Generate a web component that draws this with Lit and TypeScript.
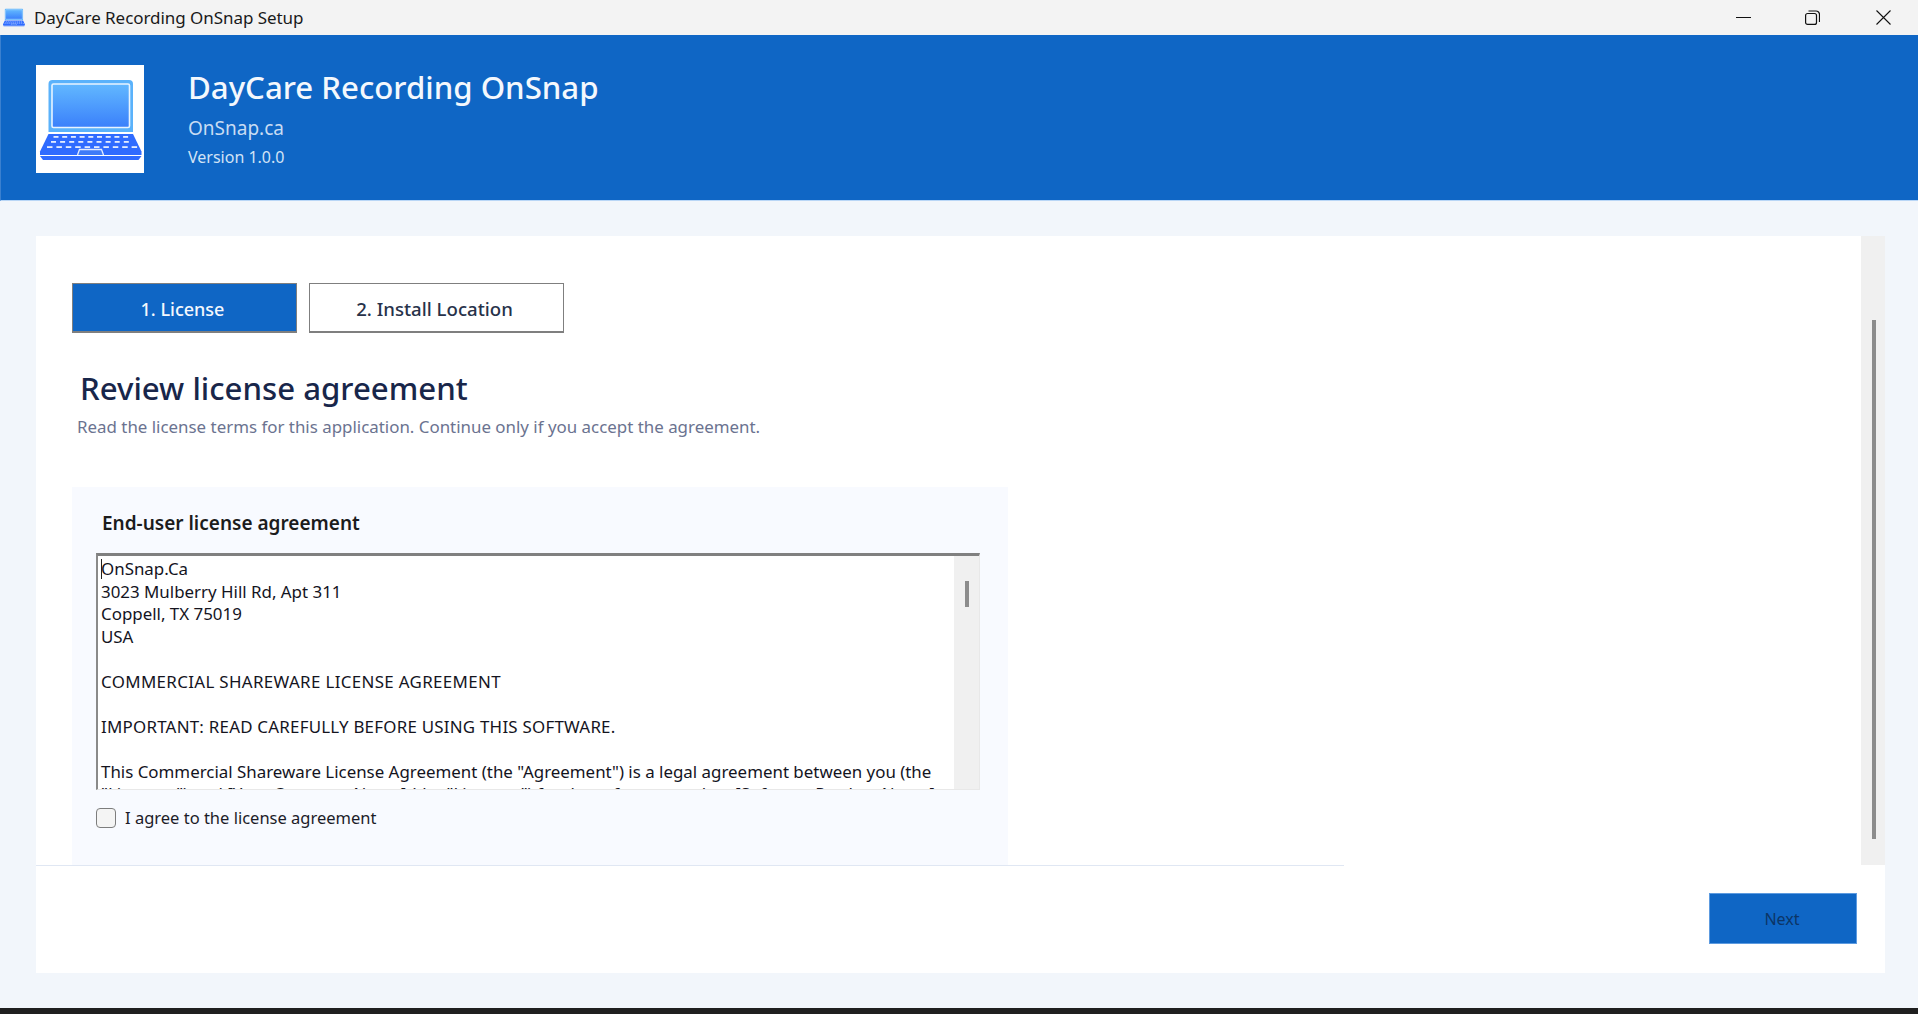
import { LitElement, html, css, svg } from "lit";
import { customElement } from "lit/decorators.js";

const laptop = svg`
  <defs>
    <linearGradient id="scr" x1="0" y1="0" x2="0" y2="1">
      <stop offset="0" stop-color="#62b8ff"/><stop offset="1" stop-color="#3a80fb"/>
    </linearGradient>
  </defs>
  <path d="M12.500 19a4 4 0 0 1 4-4h76.500a4 4 0 0 1 4 4v48h-84.500z" fill="#5ab2fb"/>
  <rect x="16" y="19" width="77.500" height="43.500" rx="1.500" fill="url(#scr)" stroke="#e8f4ff" stroke-width="1.600"/>
  <path d="M12.500 69h84.500l8.500 17.500v3.500h-101.500v-3.500z" fill="#2f6bff"/>
  <path d="M4 91h101.500l-3 4h-95.500z" fill="#2f6bff"/>
  <g fill="#e3ecff">
    ${[0, 1, 2, 3, 4, 5, 6, 7, 8].map((i) => svg`<rect x="${17.5 + i * 8.7}" y="71" width="5" height="1.800"/>`)}
    ${[0, 1, 2, 3, 4, 5, 6, 7, 8].map((i) => svg`<rect x="${15 + i * 9.1}" y="76" width="5" height="1.800"/>`)}
    ${[0, 1, 2, 3, 4, 5, 6, 7, 8, 9].map((i) => svg`<rect x="${11 + i * 9.4}" y="81.200" width="5.500" height="1.800"/>`)}
  </g>
  <path d="M41.500 90l2-5.500h22l2 5.500" fill="#3f7bf8" stroke="#e4ecff" stroke-width="1.300"/>
`;

@customElement("app-root")
export class AppRoot extends LitElement {
  static styles = css`
    :host { display: block; font-family: "Noto Sans", "Open Sans", sans-serif; }
    .win { display: flex; flex-direction: column; height: 1014px; width: 1918px; overflow: hidden; background: #f2f6fb; }
    .titlebar { height: 35px; flex: none; background: #f3f3f3; display: flex; align-items: center; padding-left: 3px; color: #1a1a1a; font-size: 17px; letter-spacing: -0.06px; }
    .titlebar .ic { width: 22px; height: 19px; margin-right: 9px; }
    .titlebar .grow { flex: 1; }
    .winbtn { display: flex; margin-right: 27px; gap: 54px; align-items: center; }
    .winbtn svg { width: 15px; height: 15px; display: block; }
    .winbtn svg:last-child { margin-left: 2px; }
    .header { flex: none; height: 165px; background: #0f66c5; border-bottom: 1px solid #b9d6f6; border-left: 1px solid #3b80cf; display: flex; align-items: center; gap: 44px; padding: 0 35px; }
    .logo { width: 108px; height: 108px; background: #fff; flex: none; display: block; margin-top: 3px; }
    .h-title { color: #f4f8fd; font-size: 31.200px; font-weight: 500; line-height: 40px; }
    .h-sub { color: #c8dcf3; font-size: 19px; line-height: 26px; margin-top: 8px; }
    .h-ver { color: #d2e3f6; font-size: 16px; line-height: 22px; margin-top: 5px; }
    .body { flex: 1; padding: 35px 33px 35px 36px; display: flex; }
    .card { flex: 1; background: #fff; display: flex; flex-direction: column; }
    .upper { height: 629px; display: flex; flex: none; }
    .content { flex: 1; padding: 47px 0 0 36px; display: flex; flex-direction: column; align-items: flex-start; }
    .sb { flex: none; width: 24px; background: #f0f0f0; padding-top: 84px; box-sizing: border-box; }
    .sb i { display: block; width: 4px; height: 519px; background: #8c8c8c; margin: 0 0 0 11px; }
    .tabs { display: flex; gap: 12px; }
    .tab { height: 50px; box-sizing: border-box; display: flex; align-items: center; justify-content: center; border: 1px solid #7f7f7f; border-bottom-width: 2px; padding: 2px 4px 0 0; font-weight: 500; }
    .tab.on { width: 225px; background: #0f66c5; color: #f4f8fd; font-size: 18px; }
    .tab.off { width: 255px; background: #fff; color: #27324a; font-size: 18.600px; }
    h1 { margin: 34px 0 0 8px; font-size: 31.200px; line-height: 42px; font-weight: 500; color: #18264a; }
    .lead { margin: 6px 0 0 5px; font-size: 16.900px; line-height: 24px; color: #6b7390; }
    .panel { margin-top: 48px; width: 936px; height: 378px; box-sizing: border-box; background: #f8faff; padding: 23px 0 0 24px; }
    .panel h2 { margin: 0 0 0 6px; font-size: 19px; line-height: 26px; font-weight: 600; color: #1c1c1c; }
    .tb { margin-top: 17px; width: 884px; height: 237px; box-sizing: border-box; display: flex; background: #fff; border-top: 3px solid #808080; border-left: 2px solid #8a8a8a; border-right: 1px solid #e8e8e8; border-bottom: 1px solid #e8e8e8; }
    .txt { flex: 1; overflow: hidden; padding: 2px 0 0 3px; font-size: 16.900px; line-height: 22.500px; color: #14141e; white-space: pre-line; }
    .caps { letter-spacing: 0.350px; }
    .caps2 { letter-spacing: 0.240px; }
    .caret { display: inline-block; width: 1px; height: 20px; background: #222; margin-right: -1px; vertical-align: -4px; }
    .tsb { flex: none; width: 25px; background: #f0f0f0; padding: 25px 0 0 11px; box-sizing: border-box; }
    .tsb i { display: block; width: 4px; height: 26px; background: #8c8c8c; }
    .agree { display: flex; align-items: center; gap: 9px; margin-top: 16px; font-size: 16.500px; color: #1c1c28; }
    .box { width: 20px; height: 20px; box-sizing: border-box; border: 1.500px solid #7d7d7d; border-radius: 4px; background: #f4f4f4; }
    .foot { flex: 1; display: flex; flex-direction: column; }
    .rule { width: 1308px; height: 1px; background: #e0e7f3; flex: none; }
    .foot-row { display: flex; justify-content: flex-end; padding: 27px 28px 0 0; }
    .next { width: 148px; height: 51px; box-sizing: border-box; background: #0f66c5; border: 1px solid #5d9be0; color: #0c3566; font-size: 16px; display: flex; align-items: center; justify-content: center; padding-right: 2px; }
    .dark { flex: none; height: 6px; background: #1f1f1f; }
  `;

  render() {
    return html`
      <div class="win">
        <div class="titlebar">
          <svg class="ic" viewBox="4 14 102 82">${laptop}</svg>
          <span>DayCare Recording OnSnap Setup</span>
          <span class="grow"></span>
          <div class="winbtn">
            <svg viewBox="0 0 15 15"><path d="M0 7.500h15" stroke="#111" stroke-width="1" fill="none"/></svg>
            <svg viewBox="0 0 15 15" fill="none" stroke="#111" stroke-width="1.200"><rect x=".6" y="3.500" width="10.900" height="10.900" rx="2"/><path d="M3.500 1h7.500a3.500 3.500 0 0 1 3.500 3.500v7.500"/></svg>
            <svg viewBox="0 0 15 15" fill="none" stroke="#111" stroke-width="1.100"><path d="M.5.5l14 14M14.500.5l-14 14"/></svg>
          </div>
        </div>
        <div class="header">
          <svg class="logo" viewBox="0 0 108 108">${laptop}</svg>
          <div>
            <div class="h-title">DayCare Recording OnSnap</div>
            <div class="h-sub">OnSnap.ca</div>
            <div class="h-ver">Version 1.0.0</div>
          </div>
        </div>
        <div class="body">
          <div class="card">
            <div class="upper">
              <div class="content">
                <div class="tabs">
                  <div class="tab on">1. License</div>
                  <div class="tab off">2. Install Location</div>
                </div>
                <h1>Review license agreement</h1>
                <div class="lead">Read the license terms for this application. Continue only if you accept the agreement.</div>
                <div class="panel">
                  <h2>End-user license agreement</h2>
                  <div class="tb">
                    <div class="txt"><span class="caret"></span>OnSnap.Ca
3023 Mulberry Hill Rd, Apt 311
Coppell, TX 75019
USA

<span class="caps">COMMERCIAL SHAREWARE LICENSE AGREEMENT</span>

<span class="caps2">IMPORTANT: READ CAREFULLY BEFORE USING THIS SOFTWARE.</span>

This Commercial Shareware License Agreement (the "Agreement") is a legal agreement between you (the
"Licensee") and [Your Company Name] (the "Licensor") for the software product [Software Product Name]</div>
                    <div class="tsb"><i></i></div>
                  </div>
                  <div class="agree"><span class="box"></span><span>I agree to the license agreement</span></div>
                </div>
              </div>
              <div class="sb"><i></i></div>
            </div>
            <div class="foot">
              <div class="rule"></div>
              <div class="foot-row"><div class="next">Next</div></div>
            </div>
          </div>
        </div>
        <div class="dark"></div>
      </div>
    `;
  }
}
